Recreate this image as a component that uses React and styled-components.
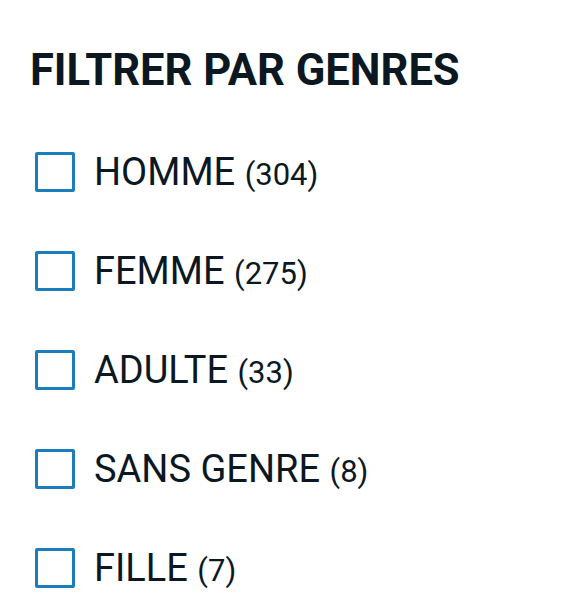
import React from 'react'
import styled, { createGlobalStyle } from 'styled-components'

const genres = [
  { label: 'HOMME', count: 304 },
  { label: 'FEMME', count: 275 },
  { label: 'ADULTE', count: 33 },
  { label: 'SANS GENRE', count: 8 },
  { label: 'FILLE', count: 7 },
]

function App() {
  return (
    <>
      <GlobalStyle />
      <Panel>
        <Title>FILTRER PAR GENRES</Title>
        <List>
          {genres.map((g) => (
            <Row key={g.label}>
              <Box type="checkbox" />
              <Label>
                {g.label} <Count>({g.count})</Count>
              </Label>
            </Row>
          ))}
        </List>
      </Panel>
    </>
  )
}

export default App

const GlobalStyle = createGlobalStyle`
  body {
    margin: 0;
    background: #ffffff;
    font-family: Roboto, "Liberation Sans", sans-serif;
  }
`

const Panel = styled.div`
  padding: 45px 0 0 30px;
`

const Title = styled.h2`
  margin: 0;
  font-size: 43.5px;
  font-weight: 700;
  line-height: 52px;
  color: #0b1822;
`

const List = styled.div`
  margin-top: 55px;
  display: flex;
  flex-direction: column;
  gap: 59px;
`

const Row = styled.label`
  display: flex;
  align-items: center;
  gap: 19px;
  height: 40px;
  padding-left: 5px;
`

const Box = styled.input`
  appearance: none;
  margin: 0;
  width: 40px;
  height: 40px;
  border: 3.5px solid #1c7dbc;
  border-radius: 2px;
  box-sizing: border-box;
  background: #fff;
`

const Label = styled.span`
  font-size: 38px;
  color: #0b1822;
  white-space: nowrap;
`

const Count = styled.span`
  font-size: 31px;
`
